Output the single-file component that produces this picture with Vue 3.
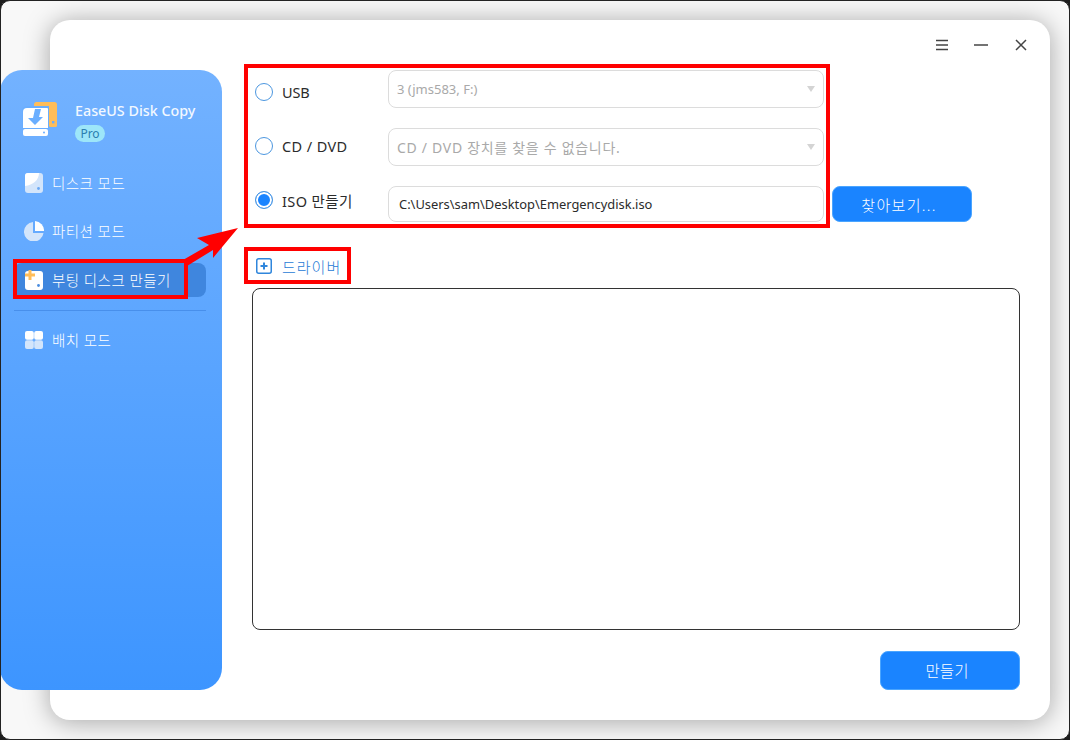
<script setup>
const navItems = [
  { key: 'disk', label: '디스크 모드' },
  { key: 'part', label: '파티션 모드' },
  { key: 'boot', label: '부팅 디스크 만들기', active: true },
  { key: 'batch', label: '배치 모드', divided: true },
]
</script>

<template>
  <div class="frame">
    <aside class="sidebar">
      <div class="brand">
        <svg class="logo" width="38" height="38" viewBox="0 0 38 38">
          <rect x="14" y="3" width="23" height="22" rx="2.500" fill="#ffbd59" />
          <rect x="29" y="19" width="8" height="9" rx="1.500" fill="#ffbd59" />
          <path d="M27.500 28V19H29V28z" fill="#6aaeff" />
          <rect x="32" y="22" width="2.400" height="2.400" fill="#6aaeff" />
          <path d="M2 12a5 5 0 0 1 5-5h22v23H2z" fill="#6aaeff" />
          <path d="M3 13a4 4 0 0 1 4-4h20a1 1 0 0 1 1 1v19H3z" fill="#fff" />
          <path d="M15 10h6l-2 8h4l-8 8-7-7h5z" fill="#6aaeff" />
          <rect x="3" y="30" width="25" height="7" rx="2" fill="#fff" />
          <circle cx="24" cy="33.500" r="1" fill="#6aaeff" />
        </svg>
        <div class="brand-text">
          <div class="brand-name">EaseUS Disk Copy</div>
          <span class="pro">Pro</span>
        </div>
      </div>
      <nav class="nav">
        <template v-for="item in navItems" :key="item.key">
          <div v-if="item.divided" class="divider"></div>
          <div class="nav-item" :class="{ active: item.active }">
            <svg class="nav-icon" width="20" height="20" viewBox="0 0 20 20">
              <template v-if="item.key === 'disk'">
                <rect x="1" y="0" width="18" height="20" rx="3" fill="#d3e5fb" />
                <path d="M4 0h11C15 7 9 12 1 13V3a3 3 0 0 1 3-3z" fill="#fff" />
                <circle cx="14.500" cy="15.500" r="1.400" fill="#6aa9f5" />
              </template>
              <template v-else-if="item.key === 'part'">
                <path d="M9 1v11h10.500A9.800 9.800 0 1 1 9 1z" fill="#d3e5fb" />
                <path d="M11 0a9.500 9.500 0 0 1 9 10h-9z" fill="#fff" />
              </template>
              <template v-else-if="item.key === 'boot'">
                <rect x="1" y="1" width="18" height="19" rx="3" fill="#fff" />
                <circle cx="14.500" cy="15.500" r="1.400" fill="#4a8de0" />
                <path d="M4.500 0h3v3.500H11v3H7.500V10h-3V6.500H1v-3h3.500z" fill="#ffbd59" />
              </template>
              <template v-else>
                <rect x="1" y="1" width="8.800" height="8.800" rx="2" fill="#fff" />
                <rect x="10.200" y="1" width="8.800" height="8.800" rx="2" fill="#fff" />
                <rect x="1" y="10.200" width="8.800" height="8.800" rx="2" fill="#d3e5fb" />
                <rect x="10.200" y="10.200" width="8.800" height="8.800" rx="2" fill="#d3e5fb" />
              </template>
            </svg>
            <span>{{ item.label }}</span>
          </div>
        </template>
      </nav>
    </aside>

    <main class="window">
      <header class="titlebar">
        <svg width="12" height="12" viewBox="0 0 12 12" class="tb-menu">
          <path d="M0 1.500h12M0 6h12M0 10.500h12" stroke="#444" stroke-width="1.500" fill="none" />
        </svg>
        <svg width="14" height="12" viewBox="0 0 14 12" class="tb-min">
          <path d="M0 6h14" stroke="#444" stroke-width="1.500" fill="none" />
        </svg>
        <svg width="12" height="12" viewBox="0 0 12 12" class="tb-close">
          <path d="M1 1l10 10M11 1L1 11" stroke="#444" stroke-width="1.500" fill="none" />
        </svg>
      </header>

      <div class="content">
        <div class="rows">
          <div class="row">
            <label class="choice choice-usb"><span class="radio"></span>USB</label>
            <div class="select tall disabled">3 (jms583, F:)<span class="caret"></span></div>
          </div>
          <div class="row">
            <label class="choice choice-cd"><span class="radio"></span>CD / DVD</label>
            <div class="select tall disabled wide-text">CD / DVD 장치를 찾을 수 없습니다.<span class="caret"></span></div>
          </div>
          <div class="row">
            <label class="choice choice-iso"><span class="radio checked"></span>ISO 만들기</label>
            <div class="select path">C:\Users\sam\Desktop\Emergencydisk.iso</div>
            <button class="btn browse">찾아보기...</button>
          </div>
        </div>

        <div class="driver">
          <svg width="16" height="16" viewBox="0 0 16 16">
            <rect x="0.750" y="0.750" width="14.500" height="14.500" rx="2" fill="none" stroke="#2f86dc" stroke-width="1.500" />
            <path d="M8 4.500v7M4.500 8h7" stroke="#2f86dc" stroke-width="2" fill="none" />
          </svg>
          <span>드라이버</span>
        </div>

        <div class="driver-box"></div>

        <div class="actions">
          <button class="btn create">만들기</button>
        </div>
      </div>
    </main>

    <svg class="annotations" width="1070" height="740" viewBox="0 0 1070 740">
      <g fill="none" stroke="#f00" stroke-width="4">
        <rect x="246" y="66" width="582" height="160" />
        <rect x="246" y="249" width="103" height="33" />
        <rect x="15" y="261" width="171" height="36" />
      </g>
      <path d="M238 228L197 238 209 245 183 260 187 266 213 250 213 258z" fill="#f00" />
    </svg>
  </div>
</template>

<style>
html, body { margin: 0; background: #1c1c1c; }
</style>

<style scoped>
.frame {
  position: relative;
  box-sizing: border-box;
  width: 1070px;
  height: 740px;
  padding: 19px 19px 19px 0;
  display: flex;
  border: 1px solid #222;
  border-radius: 10px;
  background: #f8f8f8;
  overflow: hidden;
  font-family: "Noto Sans", "Noto Sans CJK KR", sans-serif;
}
.sidebar {
  flex: 0 0 222px;
  margin: 50px -172px 30px -1px;
  position: relative;
  z-index: 1;
  box-sizing: border-box;
  padding-top: 30px;
  border-radius: 22px;
  background: linear-gradient(180deg, #73b2ff 0%, #3d95ff 100%);
  color: #fff;
}
.brand {
  height: 66px;
  display: flex;
  align-items: flex-start;
  padding-left: 20px;
}
.logo { margin-top: -1px; }
.brand-text { margin-left: 17px; }
.brand-name {
  font-size: 14.300px;
  line-height: 22px;
  font-weight: 500;
  color: #f2f8ff;
}
.pro {
  display: block;
  width: 30px;
  height: 17px;
  margin-top: 3px;
  border-radius: 9px;
  background: #9de6f9;
  color: #2b7fb0;
  font-size: 12px;
  line-height: 17px;
  text-align: center;
}
.nav {
  display: flex;
  flex-direction: column;
  padding: 0 16px 0 14px;
  gap: 14px;
}
.nav-item {
  height: 34px;
  display: flex;
  align-items: center;
  padding-left: 10px;
  border-radius: 8px;
  font-size: 14.500px;
  font-weight: 300;
  letter-spacing: 0.450px;
}
.nav-item span { margin-left: 8px; margin-top: -1px; }
.nav-item.active {
  margin-top: 1px;
  background: #3f86de;
}
.divider {
  height: 1px;
  margin: -1px 0 -2px;
  background: rgba(50, 120, 215, 0.500);
}
.window {
  flex: 1;
  min-width: 0;
  display: flex;
  flex-direction: column;
  border-radius: 20px;
  background: #fff;
  box-shadow: 0 2px 26px rgba(0, 0, 0, 0.340);
}
.titlebar {
  flex: 0 0 50px;
  display: flex;
  align-items: center;
  justify-content: flex-end;
  padding-right: 23px;
  box-sizing: border-box;
}
.tb-menu { margin-right: 26px; }
.tb-min { margin-right: 27px; }
.content {
  flex: 1;
  min-height: 0;
  display: flex;
  flex-direction: column;
  padding: 0 30px 30px 202px;
}
.rows {
  display: flex;
  flex-direction: column;
  gap: 20px;
}
.row {
  display: flex;
  align-items: center;
}
.choice {
  flex: 0 0 136px;
  box-sizing: border-box;
  display: flex;
  align-items: center;
  padding-left: 3px;
  font-size: 14.500px;
  color: #2b2b2b;
}
.choice-usb { margin-top: 6px; letter-spacing: -0.200px; }
.choice-cd { margin-bottom: 2px; letter-spacing: 0.400px; }
.choice-iso { margin-bottom: 8px; letter-spacing: 0.400px; }
.radio {
  box-sizing: border-box;
  flex: none;
  width: 18px;
  height: 18px;
  margin-right: 9px;
  border: 1.500px solid #4c97e0;
  border-radius: 50%;
  background: #fff;
}
.radio.checked {
  background: #1a84ff;
  box-shadow: inset 0 0 0 2px #fff;
}
.select {
  position: relative;
  box-sizing: border-box;
  width: 436px;
  display: flex;
  align-items: center;
  border: 1px solid #dcdcdc;
  border-radius: 8px;
  font-size: 13px;
  background: #fff;
}
.tall { height: 38px; padding: 0 0 0 8px; }
.disabled { color: #a9a9a9; }
.wide-text { font-size: 14px; letter-spacing: 0.700px; }
.path {
  height: 36px;
  padding-left: 10px;
  color: #2b2b2b;
  font-size: 12.900px;
}
.caret {
  position: absolute;
  right: 8px;
  top: 15px;
  width: 0;
  height: 0;
  border-left: 4.500px solid transparent;
  border-right: 4.500px solid transparent;
  border-top: 6px solid #d4d4d4;
}
.btn {
  border: 1px solid #4aa5ff;
  border-radius: 8px;
  background: #1a84ff;
  color: #fff;
  font-family: inherit;
  font-size: 15px;
  font-weight: 300;
  padding: 0;
}
.browse {
  flex: none;
  width: 140px;
  height: 36px;
  margin-left: 8px;
  padding-right: 6px;
  letter-spacing: 1.300px;
}
.driver {
  flex: none;
  height: 24px;
  margin-top: 32px;
  display: flex;
  align-items: center;
  padding-left: 4px;
  color: #1f7bd6;
  font-size: 15px;
  font-weight: 300;
  letter-spacing: 1px;
}
.driver span { margin-left: 10px; }
.driver-box {
  flex: 1;
  min-height: 0;
  margin-top: 10px;
  border: 1px solid #333;
  border-radius: 8px;
}
.actions {
  display: flex;
  justify-content: flex-end;
  margin-top: 21px;
}
.create {
  width: 140px;
  height: 39px;
  padding-right: 6px;
  font-size: 15.500px;
}
.annotations {
  position: absolute;
  left: -1px;
  top: -1px;
  z-index: 2;
  pointer-events: none;
}
</style>
